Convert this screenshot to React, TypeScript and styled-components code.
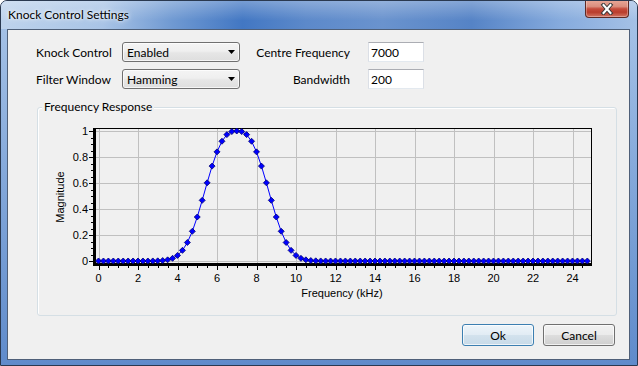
import React from "react";
import styled, { createGlobalStyle } from "styled-components";

const GlobalStyle = createGlobalStyle`
  html, body {
    margin: 0;
    padding: 0;
    background: #ffffff;
  }
  body {
    font-family: "Segoe UI", Lato, "Noto Sans", sans-serif;
  }
`;

const Window = styled.div`
  width: 638px;
  height: 366px;
  box-sizing: border-box;
  border: 1px solid #2a3950;
  border-radius: 7px 7px 0 0;
  background: linear-gradient(180deg, #a9c5e8 0%, #86aadb 45%, #5f8bcb 100%);
  display: flex;
  flex-direction: column;
  overflow: hidden;
`;

const TitleBar = styled.div`
  height: 28px;
  flex-shrink: 0;
  display: flex;
  align-items: flex-start;
  justify-content: space-between;
  padding: 0 8px 0 7px;
  background:
    linear-gradient(180deg, rgba(255, 255, 255, 0.28), rgba(255, 255, 255, 0) 70%),
    linear-gradient(
      90deg,
      #bed3ec 0%,
      #a9c4e6 16%,
      #6f99d2 27%,
      #4277c3 38%,
      #5c89ca 48%,
      #6a93ce 60%,
      #5583c6 74%,
      #86abdd 88%,
      #a5c1e6 100%
    );
`;

const TitleText = styled.div`
  padding-top: 6px;
  font-size: 12px;
  line-height: 16px;
  color: #000;
  text-shadow: 0 0 6px rgba(255, 255, 255, 0.95), 0 0 3px rgba(255, 255, 255, 0.9);
`;

const CloseButton = styled.div`
  width: 44px;
  height: 18px;
  margin-top: -1px;
  box-sizing: border-box;
  border: 1px solid #5e2a25;
  border-top: none;
  border-radius: 0 0 4px 4px;
  background: linear-gradient(180deg, #e9a999 0%, #db8e7e 38%, #c54c3c 52%, #b93d2d 72%, #d27563 100%);
  box-shadow: inset 0 0 0 1px rgba(255, 255, 255, 0.3);
  display: flex;
  align-items: center;
  justify-content: center;
`;

const Frame = styled.div`
  flex: 1;
  display: flex;
  padding: 0 7px 5px 6px;
`;

const Client = styled.div`
  flex: 1;
  box-sizing: border-box;
  border: 1px solid #4e5f78;
  background: #f0f0f0;
  display: flex;
  flex-direction: column;
  padding: 12px 0 13px 0;
  font-size: 12px;
  color: #000;
`;

const FormGrid = styled.div`
  display: grid;
  grid-template-columns: 86px 118px 128px 56px;
  grid-auto-rows: 20px;
  row-gap: 7px;
  padding-left: 28px;
`;

const Label = styled.div<{ $right?: boolean }>`
  display: flex;
  align-items: center;
  justify-content: ${(p) => (p.$right ? "flex-end" : "flex-start")};
  padding-right: ${(p) => (p.$right ? "18px" : "0")};
  white-space: nowrap;
`;

const Combo = styled.div`
  box-sizing: border-box;
  height: 20px;
  border: 1px solid #707070;
  border-radius: 3px;
  background: linear-gradient(180deg, #f4f4f4 0%, #efefef 45%, #e6e6e6 55%, #dedede 100%);
  box-shadow: inset 0 0 0 1px rgba(255, 255, 255, 0.7);
  display: flex;
  align-items: center;
  justify-content: space-between;
  padding: 0 4px 0 4px;
`;

const TextBox = styled.div`
  box-sizing: border-box;
  height: 20px;
  background: #fff;
  border: 1px solid #dbdfe6;
  border-top-color: #abadb3;
  border-bottom-color: #e3e9ef;
  display: flex;
  align-items: center;
  padding-left: 2px;
`;

const GroupBox = styled.div`
  position: relative;
  height: 209px;
  box-sizing: border-box;
  margin: 18px 12px 0 29px;
  border: 1px solid #d5dfe5;
  border-radius: 3px;
  box-shadow: inset 1px 1px 0 #ffffff;
`;

const GroupTitle = styled.div`
  position: absolute;
  top: -9px;
  left: 4px;
  padding: 0 2px;
  line-height: 16px;
  background: #f0f0f0;
`;

const ButtonRow = styled.div`
  margin-top: 8px;
  display: flex;
  justify-content: flex-end;
  gap: 9px;
  padding-right: 14px;
`;

const Button = styled.div<{ $default?: boolean }>`
  width: 72px;
  height: 22px;
  box-sizing: border-box;
  border: 1px solid ${(p) => (p.$default ? "#3c7fb1" : "#707070")};
  border-radius: 3px;
  background: ${(p) =>
    p.$default
      ? "linear-gradient(180deg, #eef5fa 0%, #e2ecf4 48%, #d3e2ed 52%, #c7dae8 100%)"
      : "linear-gradient(180deg, #f2f2f2 0%, #ebebeb 48%, #dddddd 52%, #cfcfcf 100%)"};
  box-shadow: inset 0 0 0 1px rgba(255, 255, 255, 0.7);
  display: flex;
  align-items: center;
  justify-content: center;
`;

const ArrowIcon = () => (
  <svg width="7" height="4" viewBox="0 0 7 4">
    <path d="M0 0 H7 L3.5 4 Z" fill="#000" />
  </svg>
);

const CloseIcon = () => (
  <svg width="14" height="12" viewBox="0 0 14 12">
    <path d="M3.5 2 L10.5 10 M10.5 2 L3.5 10" stroke="#3a3a3a" strokeWidth="4" strokeLinecap="square" />
    <path d="M3.5 2 L10.5 10 M10.5 2 L3.5 10" stroke="#ffffff" strokeWidth="2" strokeLinecap="square" />
  </svg>
);

// page coordinates of the plot
const X = (f: number) => 98.5 + 19.75 * f;
const Y = (v: number) => 261 - 130 * v;

const points = Array.from({ length: 100 }, (_, i) => {
  const f = i * 0.25;
  const v = Math.exp(-Math.pow(Math.abs(f - 7) / 1.94, 2.63));
  return { x: X(f), y: Y(v) };
});

const Chart = () => {
  const xTicks = Array.from({ length: 13 }, (_, i) => i * 2);
  const yTicks = [0, 0.2, 0.4, 0.6, 0.8, 1];
  const minorX = Array.from({ length: 50 }, (_, i) => i * 0.5);
  const minorY = Array.from({ length: 21 }, (_, i) => i * 0.05);
  const font = '"Liberation Sans", Arial, sans-serif';

  return (
    <svg width="578" height="207" style={{ display: "block" }}>
      <g transform="translate(-38,-108)">
        {xTicks.map((f) => (
          <line key={"gx" + f} x1={Math.round(X(f)) + 0.5} x2={Math.round(X(f)) + 0.5} y1={129} y2={263} stroke="#c0c0c0" />
        ))}
        {yTicks.map((v) => (
          <line key={"gy" + v} x1={96} x2={591} y1={Y(v) + 0.5} y2={Y(v) + 0.5} stroke="#c0c0c0" />
        ))}
        <rect x={93.5} y={128.5} width={498} height={136} fill="none" stroke="#000" />
        <rect x={93} y={128} width={3} height={138} fill="#000" />
        <rect x={93} y={263} width={499} height={3} fill="#000" />
        {minorY.map((v, i) => (
          <line key={"ty" + i} x1={i % 4 === 0 ? 89 : 91} x2={93} y1={Math.round(Y(v)) + 0.5} y2={Math.round(Y(v)) + 0.5} stroke="#000" />
        ))}
        {minorX.map((f, i) => (
          <line key={"tx" + i} x1={Math.round(X(f)) + 0.5} x2={Math.round(X(f)) + 0.5} y1={266} y2={i % 4 === 0 ? 270 : 268} stroke="#000" />
        ))}
        {xTicks.map((f) => (
          <text key={"lx" + f} x={X(f)} y={282} fontFamily={font} fontSize="11" textAnchor="middle" fill="#000">
            {f}
          </text>
        ))}
        {yTicks.map((v) => (
          <text key={"ly" + v} x={88} y={Y(v) + 4} fontFamily={font} fontSize="11" textAnchor="end" fill="#000">
            {v === 0 || v === 1 ? String(v) : v.toFixed(1)}
          </text>
        ))}
        <text x={342} y={297} fontFamily={font} fontSize="11" textAnchor="middle" fill="#000">
          Frequency (kHz)
        </text>
        <text transform="translate(64,197) rotate(-90)" fontFamily={font} fontSize="11" textAnchor="middle" fill="#000">
          Magnitude
        </text>
        <polyline points={points.map((p) => `${p.x},${p.y}`).join(" ")} fill="none" stroke="#0000ff" strokeWidth="1" />
        {points.map((p, i) => (
          <path
            key={"p" + i}
            d={`M${p.x} ${p.y - 3} L${p.x + 3} ${p.y} L${p.x} ${p.y + 3} L${p.x - 3} ${p.y} Z`}
            fill="#0000ff"
            stroke="#000070"
            strokeWidth="0.8"
          />
        ))}
      </g>
    </svg>
  );
};

export default function App() {
  return (
    <>
      <GlobalStyle />
      <Window>
        <TitleBar>
          <TitleText>Knock Control Settings</TitleText>
          <CloseButton>
            <CloseIcon />
          </CloseButton>
        </TitleBar>
        <Frame>
          <Client>
            <FormGrid>
              <Label>Knock Control</Label>
              <Combo>
                <span>Enabled</span>
                <ArrowIcon />
              </Combo>
              <Label $right>Centre Frequency</Label>
              <TextBox>7000</TextBox>
              <Label>Filter Window</Label>
              <Combo>
                <span>Hamming</span>
                <ArrowIcon />
              </Combo>
              <Label $right>Bandwidth</Label>
              <TextBox>200</TextBox>
            </FormGrid>
            <GroupBox>
              <GroupTitle>Frequency Response</GroupTitle>
              <Chart />
            </GroupBox>
            <ButtonRow>
              <Button $default>Ok</Button>
              <Button>Cancel</Button>
            </ButtonRow>
          </Client>
        </Frame>
      </Window>
    </>
  );
}
